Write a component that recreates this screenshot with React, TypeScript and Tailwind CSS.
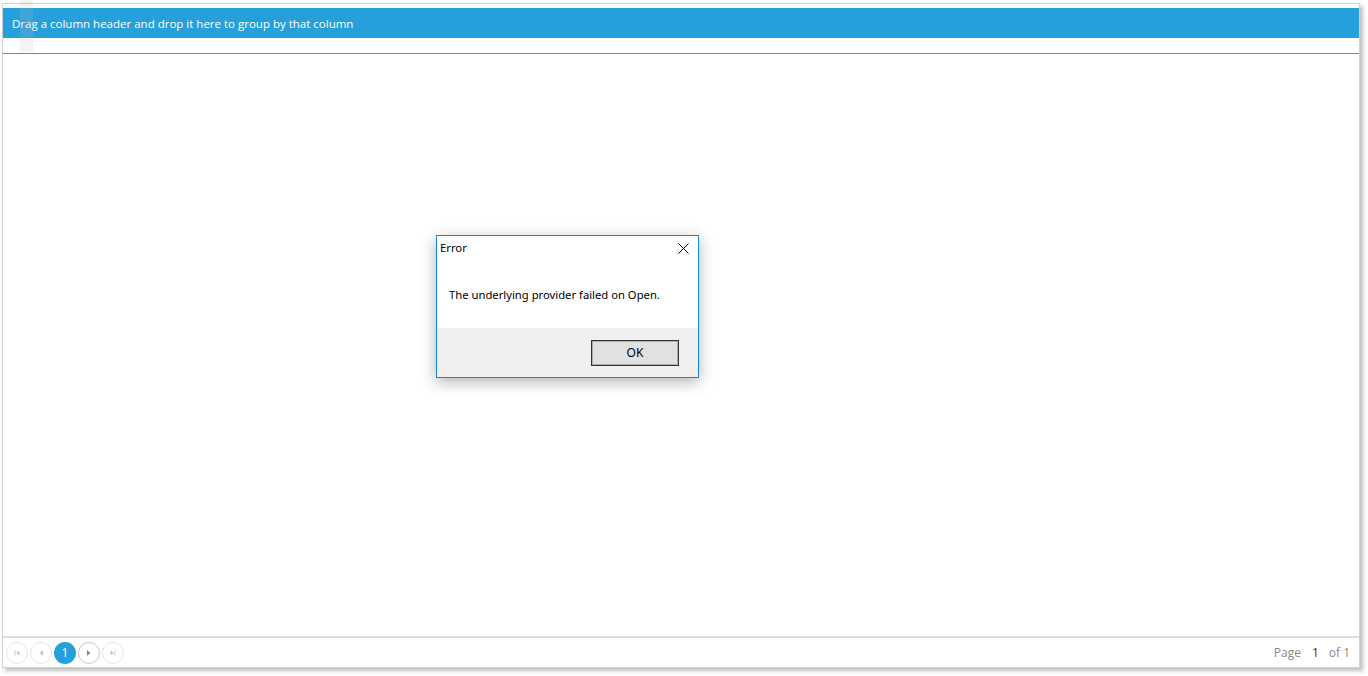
import React from "react";

const font = { fontFamily: '"Open Sans", "Noto Sans", sans-serif' };

function PagerButton({ children, active, strong }: { children?: React.ReactNode; active?: boolean; strong?: boolean }) {
  return (
    <div
      className={`w-[22px] h-[22px] rounded-full flex items-center justify-center text-[9px] ${
        active
          ? "bg-[#25a0da] text-white text-[13px]"
          : strong
          ? "border border-[#c8c8c8] text-[#777]"
          : "border border-[#e6e6e6] text-[#c8c8c8]"
      }`}
    >
      {children}
    </div>
  );
}

function FirstIcon({ color }: { color: string }) {
  return (
    <svg width="6" height="6" viewBox="0 0 6 6">
      <rect x="0.5" y="0.5" width="1" height="5" fill={color} />
      <path d="M5.5 0.5 L2 3 L5.5 5.5 Z" fill={color} />
    </svg>
  );
}

function LastIcon({ color }: { color: string }) {
  return (
    <svg width="6" height="6" viewBox="0 0 6 6">
      <path d="M0.5 0.5 L4 3 L0.5 5.5 Z" fill={color} />
      <rect x="4.5" y="0.5" width="1" height="5" fill={color} />
    </svg>
  );
}

function Tri({ dir, color }: { dir: "l" | "r"; color: string }) {
  return (
    <svg width="4" height="6" viewBox="0 0 4 6">
      {dir === "l" ? <path d="M4 0 L0.5 3 L4 6 Z" fill={color} /> : <path d="M0 0 L3.5 3 L0 6 Z" fill={color} />}
    </svg>
  );
}

export default function App() {
  return (
    <div className="w-[1368px] h-[676px] bg-white relative overflow-hidden" style={font}>
      <div className="pt-[3px] pl-[2px] pr-[8px] pb-[8px] h-full">
        <div className="h-full flex flex-col border border-[#d0d0d0] shadow-[3px_3px_4px_rgba(0,0,0,0.25)] relative bg-white">
          <div className="h-[4px]" />
          <div className="h-[30px] bg-[#25a0da] text-white text-[11.5px] flex items-center pl-[9px] pt-[1px]">
            Drag a column header and drop it here to group by that column
          </div>
          <div className="h-[15px]" />
          <div className="h-px bg-[#4a93c9]" />
          <div className="flex-1" />
          <div className="h-[2px] bg-[#dcdcdc]" />
          <div className="h-[29px] flex items-center px-[3px]">
            <div className="flex items-center gap-[2px]">
              <PagerButton><FirstIcon color="#c8c8c8" /></PagerButton>
              <PagerButton><Tri dir="l" color="#c8c8c8" /></PagerButton>
              <PagerButton active>1</PagerButton>
              <PagerButton strong><Tri dir="r" color="#888" /></PagerButton>
              <PagerButton><LastIcon color="#c8c8c8" /></PagerButton>
            </div>
            <div className="ml-auto flex items-center text-[12px] text-[#888] pr-[6px] pt-[1px]">
              <span>Page</span>
              <span className="ml-[11px] text-[#5a1030]">1</span>
              <span className="ml-[10px]">of 1</span>
            </div>
          </div>
        </div>
      </div>
      <div className="absolute left-[20px] top-0 w-[13px] h-[52px] bg-[rgba(190,190,190,0.18)]" />

      <div
        className="absolute left-[436px] top-[235px] w-[263px] h-[143px] border border-[#1883d7] bg-white flex flex-col shadow-[0_4px_14px_rgba(0,0,0,0.3)]"
        style={{ fontFamily: '"Noto Sans", "Open Sans", sans-serif' }}
      >
        <div className="h-[24px] flex items-center justify-between pl-[3px] pr-[9px] text-[11.25px] text-black">
          <span>Error</span>
          <svg width="11" height="11" viewBox="0 0 11 11">
            <path d="M0.5 0.5 L10.5 10.5 M10.5 0.5 L0.5 10.5" stroke="#000" strokeWidth="1" />
          </svg>
        </div>
        <div className="flex-1 pl-[12px] pt-[27px] text-[11.25px] text-black">
          The underlying provider failed on Open.
        </div>
        <div className="h-[49px] bg-[#f0f0f0] flex items-start justify-end pr-[19px] pt-[12px]">
          <div className="w-[88px] h-[26px] border border-[#333] bg-[#e1e1e1] flex items-center justify-center text-[12px] text-black shadow-[inset_0_0_0_1px_#adadad]">
            OK
          </div>
        </div>
      </div>
    </div>
  );
}
